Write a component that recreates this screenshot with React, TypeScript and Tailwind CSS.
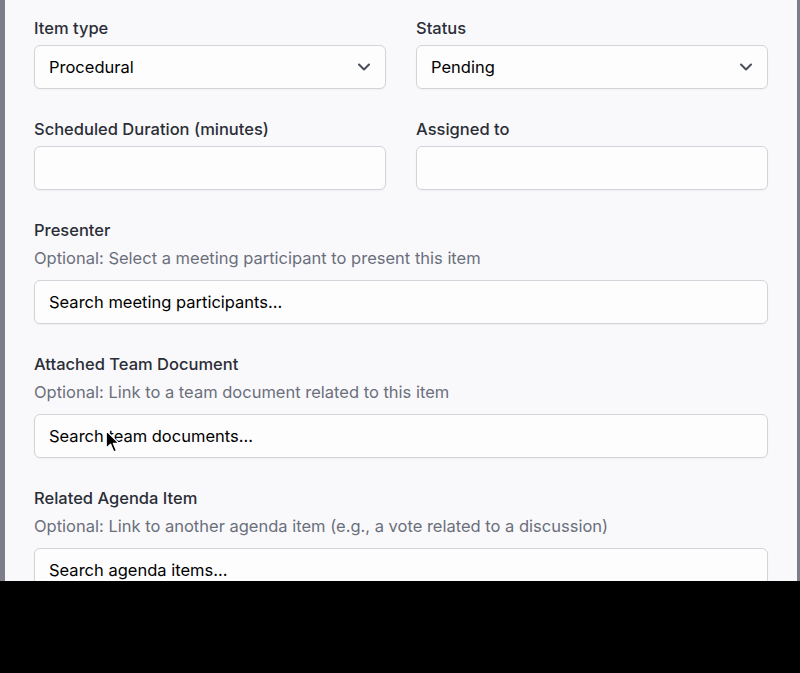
import { ChevronDown } from 'lucide-react';

const labelCls = 'block text-[16.5px] leading-6 font-medium text-[#2b2e37]';
const helpCls = 'mt-1 text-[16.5px] leading-6 text-[#6b6f7b]';
const boxCls =
  'flex items-center h-11 w-full rounded-md border border-[#d3d4da] bg-[#fdfdfe] px-3.5 text-[16.5px] text-black shadow-[0_1px_2px_rgba(0,0,0,0.04)]';

function SelectBox({ value }: { value: string }) {
  return (
    <div className={`${boxCls} mt-[5px] justify-between pr-[11px]`}>
      <span>{value}</span>
      <ChevronDown size={20} strokeWidth={2.5} className="text-[#4b4f5c]" />
    </div>
  );
}

function SearchField({ label, help, placeholder }: { label: string; help: string; placeholder: string }) {
  return (
    <div>
      <label className={labelCls}>{label}</label>
      <p className={helpCls}>{help}</p>
      <div className={`${boxCls} mt-2.5`}>{placeholder}</div>
    </div>
  );
}

function Cursor() {
  return (
    <svg className="absolute left-[100px] top-[429px]" width="15" height="26" viewBox="0 0 13 22">
      <path
        d="M1 1 L1 16.5 L4.8 13 L7.6 19.6 L10 18.6 L7.3 12.2 L12 12.2 Z"
        fill="#000"
        stroke="#fff"
        strokeWidth="1.2"
        strokeLinejoin="round"
      />
    </svg>
  );
}

export default function App() {
  return (
    <div className="h-[673px] w-[800px] bg-black" style={{ fontFamily: 'Inter, "Noto Sans", sans-serif' }}>
      <div className="relative h-[581px] overflow-hidden border-l-[5px] border-r-[3px] border-[#7c7f8a] bg-[#f9f9fb] px-[29px] pt-4">
        <div className="flex flex-col gap-7">
          <div className="grid grid-cols-2 gap-[30px]">
            <div>
              <label className={labelCls}>Item type</label>
              <SelectBox value="Procedural" />
            </div>
            <div>
              <label className={labelCls}>Status</label>
              <SelectBox value="Pending" />
            </div>
          </div>

          <div className="grid grid-cols-2 gap-[30px]">
            <div>
              <label className={labelCls}>Scheduled Duration (minutes)</label>
              <div className={`${boxCls} mt-[5px]`} />
            </div>
            <div>
              <label className={labelCls}>Assigned to</label>
              <div className={`${boxCls} mt-[5px]`} />
            </div>
          </div>

          <SearchField
            label="Presenter"
            help="Optional: Select a meeting participant to present this item"
            placeholder="Search meeting participants..."
          />
          <SearchField
            label="Attached Team Document"
            help="Optional: Link to a team document related to this item"
            placeholder="Search team documents..."
          />
          <SearchField
            label="Related Agenda Item"
            help="Optional: Link to another agenda item (e.g., a vote related to a discussion)"
            placeholder="Search agenda items..."
          />
        </div>
        <Cursor />
      </div>
    </div>
  );
}
